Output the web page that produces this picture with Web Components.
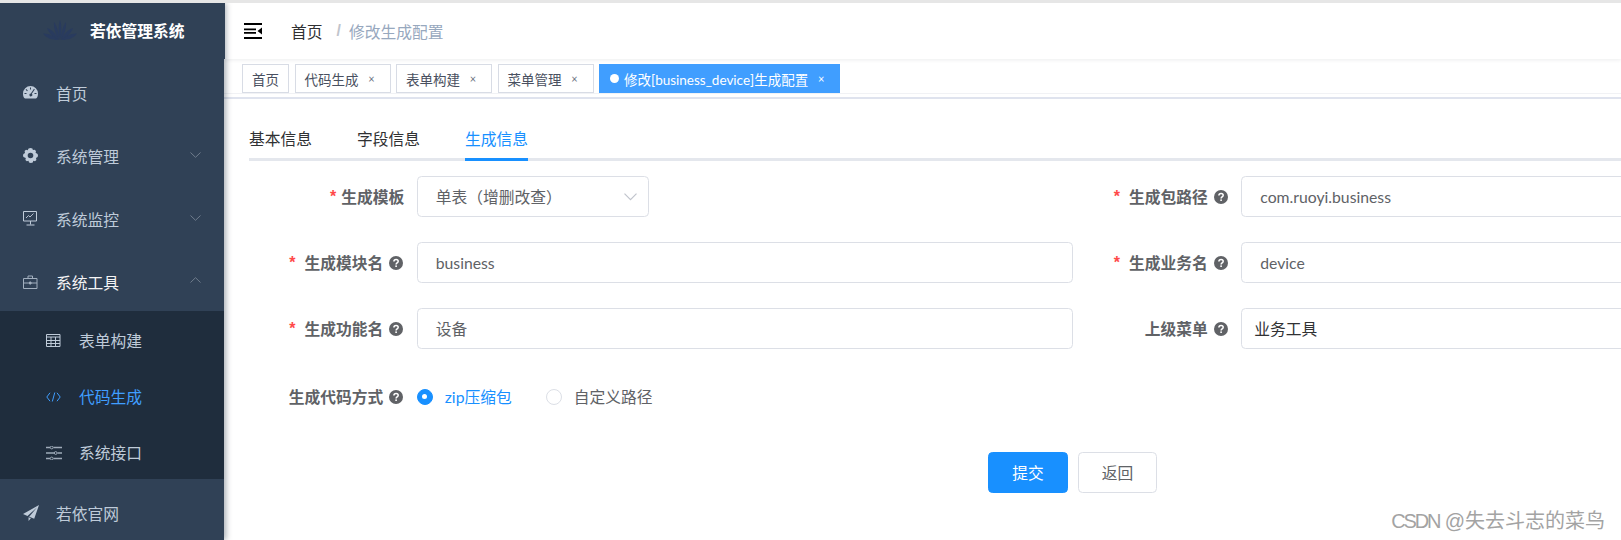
<!DOCTYPE html>
<html lang="zh">
<head>
<meta charset="utf-8">
<title>修改生成配置</title>
<style>
html, body { margin: 0; padding: 0; background: #fff; }
body { width: 1621px; height: 540px; overflow: hidden; font-family: Lato, "Noto Sans CJK SC", sans-serif; font-size: 15.75px; color: #606266; }
</style>
</head>
<body>
<app-shell>
  <side-bar slot="side">
    <menu-item icon="dashboard">首页</menu-item>
    <menu-item icon="gear" arrow="down">系统管理</menu-item>
    <menu-item icon="monitor" arrow="down">系统监控</menu-item>
    <menu-item icon="case" arrow="up" open>系统工具</menu-item>
    <sub-menu>
      <menu-item sub icon="table">表单构建</menu-item>
      <menu-item sub icon="code" active>代码生成</menu-item>
      <menu-item sub icon="sliders">系统接口</menu-item>
    </sub-menu>
    <menu-item icon="plane">若依官网</menu-item>
  </side-bar>
  <top-nav slot="main"></top-nav>
  <tag-bar slot="main">
    <tag-item>首页</tag-item>
    <tag-item closable>代码生成</tag-item>
    <tag-item closable>表单构建</tag-item>
    <tag-item closable>菜单管理</tag-item>
    <tag-item closable active>修改[business_device]生成配置</tag-item>
  </tag-bar>
  <gen-page slot="main">
    <gen-tabs></gen-tabs>
    <gen-form>
      <form-field required label="生成模板"><select-box style="width:232px">单表（增删改查）</select-box></form-field>
      <form-field required hint label="生成包路径"><text-box>com.ruoyi.business</text-box></form-field>
      <form-field required hint label="生成模块名"><text-box>business</text-box></form-field>
      <form-field required hint label="生成业务名"><text-box>device</text-box></form-field>
      <form-field required hint label="生成功能名"><text-box>设备</text-box></form-field>
      <form-field hint label="上级菜单"><text-box tree>业务工具</text-box></form-field>
      <form-field hint label="生成代码方式" style="padding-top:2px">
        <radio-opt checked>zip压缩包</radio-opt>
        <radio-opt>自定义路径</radio-opt>
      </form-field>
      <form-actions slot="actions">
        <app-button primary>提交</app-button>
        <app-button>返回</app-button>
      </form-actions>
    </gen-form>
  </gen-page>
  <water-mark slot="over"><span style="letter-spacing:-2.200px">CSDN</span> @失去斗志的菜鸟</water-mark>
</app-shell>

<script>
const ICONS = {
  dashboard: '<svg viewBox="0 0 15 13" width="15" height="13"><path fill="currentColor" fill-rule="evenodd" d="M7.5 0A7.5 7.5 0 0 0 0 7.5c0 1.9.5 3.6 1.3 4.6.2.3.5.4.8.4h10.8c.3 0 .6-.1.8-.4.8-1 1.3-2.7 1.3-4.6A7.5 7.5 0 0 0 7.5 0zM7 1.6h1v2H7zM3.300 3l1.500 1.500-.7.7-1.500-1.500zM1.500 7h2v1h-2zm10 0h2v1h-2zM11 2.800l.8.6-3 4.300a1.500 1.500 0 1 1-1-.3z"/></svg>',
  gear: '<svg viewBox="0 0 15 15" width="15" height="15"><path fill="currentColor" fill-rule="evenodd" d="M5.600.4 7.500 0l1.900.4.5 1.700 1.700-.4 1.400 1.300-.4 1.800L14.600 6l.4 1.500-.4 1.500-1.600 1.100.4 1.800-1.400 1.300-1.700-.4-.5 1.700-1.900.4-1.900-.4-.5-1.700-1.700.4-1.400-1.300.4-1.800L.4 9 0 7.500.4 6l1.600-1.100-.4-1.800L3 1.800l1.700.4zM7.500 4.700a2.800 2.800 0 1 0 0 5.600 2.800 2.800 0 0 0 0-5.600z"/></svg>',
  monitor: '<svg viewBox="0 0 15 15" width="15" height="15" fill="none" stroke="currentColor"><path d="M.5.5h13v9.500H.5zM7.500 10v3.500M3.500 14h8"/><path d="M3 7l2.500-2.500L7 6l3.500-3.500" stroke-width=".9"/></svg>',
  case: '<svg viewBox="0 0 15 14" width="15" height="14" fill="none" stroke="currentColor" opacity=".8"><path d="M.5 3.500h13.500v10H.5zM.5 8h13.500M5 3.500v-2.500h4.500v2.500"/><path fill="currentColor" d="M6.500 7h1.500v2H6.500z"/></svg>',
  table: '<svg viewBox="0 0 15 13" width="15" height="13" fill="none" stroke="currentColor"><path d="M.5.500h13.500v12H.5zM.5 3h13.500M.5 6.500h13.500M.5 9.500h13.500M5 3v9.500M9.500 3v9.500"/></svg>',
  code: '<svg viewBox="0 0 15 10" width="15" height="10" fill="none" stroke="currentColor"><path d="M4 .8.800 5 4 9.200M11 .8 14.200 5 11 9.200M8.800.5 6.300 9.500"/></svg>',
  sliders: '<svg viewBox="0 0 16 14" width="16" height="14" fill="none" stroke="currentColor" stroke-width="1.500" opacity=".8"><path d="M0 1.500h4M7.500 1.500H16M0 7h8M11.500 7H16M0 12.500h4M7.500 12.500H16"/><circle cx="5.700" cy="1.500" r="1.400" stroke-width="1"/><circle cx="9.700" cy="7" r="1.400" stroke-width="1"/><circle cx="5.700" cy="12.500" r="1.400" stroke-width="1"/></svg>',
  plane: '<svg viewBox="0 0 15 15" width="16" height="16"><path fill="currentColor" d="M15 0 0 8.500l4.200 1.700L13 2.400 5.800 10.900 10.500 13zM5.200 11.500V15l2.200-2.500z"/></svg>'
};
const HINT = '<svg viewBox="0 0 14 14" width="14" height="14"><circle cx="7" cy="7" r="7" fill="#606266"/><path d="M4.900 5.400c0-1.300 1-2 2.200-2s2.100.7 2.100 1.800c0 1.700-2.100 1.600-2.100 3.200" fill="none" stroke="#fff" stroke-width="1.500"/><rect x="6.300" y="9.400" width="1.600" height="1.600" fill="#fff"/></svg>';

// every element here is just css + markup in an open shadow root
class Base extends HTMLElement {
  constructor() {
    super();
    this.attachShadow({mode: 'open'});
  }
  connectedCallback() {
    this.shadowRoot.innerHTML = this.template();
  }
}

customElements.define('app-shell', class extends Base {
  template() { return `
<style>
:host { display: block; position: relative; width: 1621px; height: 540px; overflow: hidden; box-sizing: border-box; border-top: 3px solid #e6e6e6; }
.wrap { display: flex; height: 100%; }
.main { flex: 1; min-width: 0; display: flex; flex-direction: column; }
</style>
<div class="wrap">
  <slot name="side"></slot>
  <div class="main"><slot name="main"></slot></div>
</div>
<slot name="over"></slot>`; }
});

customElements.define('side-bar', class extends Base {
  template() { return `
<style>
:host { display: block; width: 224px; flex: none; height: 100%; background: #304156; position: relative; z-index: 3; box-shadow: 2px 0 6px rgba(0,21,41,.35); }
.logo { height: 56px; width: 225px; background: #304156; display: flex; align-items: center; box-sizing: border-box; padding: 0 0 2px 43px; }
svg { display: block; flex: none; }
.title { margin-left: 13px; color: #fff; font-weight: 700; font-size: 15.75px; white-space: nowrap; }
</style>
<div class="logo">
  <svg viewBox="0 0 34 20" width="34" height="20" fill="#293b5e">
    <path d="M17 0c1.500 3 2 12 0 20-2-8-1.500-17 0-20z"/>
    <path d="M11 2c2.500 3 5 11 5.500 18C12.500 15 10.500 8 11 2z"/>
    <path d="M23 2c-2.500 3-5 11-5.500 18C21.500 15 23.500 8 23 2z"/>
    <path d="M4 8c5 1.500 9.500 6.500 12 12C10.500 17.500 6 13.500 4 8z"/>
    <path d="M30 8c-5 1.500-9.500 6.500-12 12 5.500-2.500 10-6.500 12-12z"/>
    <path d="M0 13.500c5-.5 11 2.500 15.500 6.500C9 20 3 18 0 13.500z"/>
    <path d="M34 13.500c-5-.5-11 2.500-15.500 6.500C25 20 31 18 34 13.500z"/>
  </svg>
  <span class="title">若依管理系统</span>
</div>
<slot></slot>`; }
});

customElements.define('sub-menu', class extends Base {
  template() { return `
<style>:host { display: block; background: #1f2d3d; }</style>
<slot></slot>`; }
});

customElements.define('menu-item', class extends Base {
  template() {
    const sub = this.hasAttribute('sub');
    const active = this.hasAttribute('active');
    const color = active ? '#409eff' : this.hasAttribute('open') ? '#f4f4f5' : '#bfcbd9';
    const dir = this.getAttribute('arrow');
    const arrow = dir ? `<svg class="arrow" viewBox="0 0 11 6" width="11" height="6" fill="none" stroke="#6f7c8c"><path d="${dir === 'up' ? 'M.5 5.500 5.500.7l5 4.800' : 'M.5.500l5 4.800 5-4.800'}"/></svg>` : '';
    return `
<style>
:host { display: block; }
.row { display: flex; align-items: center; box-sizing: border-box; height: ${sub ? 56 : 63}px; padding: ${sub ? '3px 0 0 46px' : '5px 0 0 23px'}; position: relative; color: ${color}; white-space: nowrap; }
.ic { width: 33px; flex: none; display: flex; margin-top: ${sub ? 0 : -1}px; color: ${active ? '#409eff' : '#bfcbd9'}; }
svg { display: block; }
.arrow { position: absolute; left: 190px; top: ${dir === 'up' ? 29 : 30}px; }
</style>
<div class="row"><span class="ic">${ICONS[this.getAttribute('icon')] || ''}</span><slot></slot>${arrow}</div>`;
  }
});

customElements.define('top-nav', class extends Base {
  template() { return `
<style>
:host { display: flex; align-items: center; flex: none; height: 56px; box-sizing: border-box; padding-left: 20px; background: #fff; box-shadow: 0 1px 4px rgba(0,21,41,.08); position: relative; z-index: 1; }
svg { display: block; flex: none; }
.crumb { margin-left: 29px; color: #303133; display: flex; align-items: center; }
.sep { color: #c0c4cc; font-family: "Liberation Sans", sans-serif; font-weight: 700; margin: 0 8px 0 14px; }
.cur { color: #97a8be; }
</style>
<svg viewBox="0 0 18 16" width="18" height="16" fill="#000"><path d="M0 0h18v2H0zM0 14h18v2H0zM0 5.500h12v1.800H0zM0 9h12v1.800H0zM18 4.500v7L13.500 8z"/></svg>
<div class="crumb"><span>首页</span><span class="sep">/</span><span class="cur">修改生成配置</span></div>`; }
});

customElements.define('tag-bar', class extends Base {
  template() { return `
<style>
:host { display: flex; flex: none; height: 40px; box-sizing: border-box; padding: 5px 0 0 18px; gap: 5.500px; background: linear-gradient(transparent 34px, #f1f2f5 34px, #f1f2f5 35px, transparent 35px), #fff; border-bottom: 2px solid #dfe3ee; }
</style>
<slot></slot>`; }
});

customElements.define('tag-item', class extends Base {
  template() {
    const active = this.hasAttribute('active');
    return `
<style>
:host { display: block; flex: none; }
.tag { display: flex; align-items: center; height: 29px; box-sizing: border-box; padding: 0 12px 0 9px; font-size: 13.500px; white-space: nowrap; border: 1px solid ${active ? '#409eff' : '#d8dce5'}; background: ${active ? '#409eff' : '#fff'}; color: ${active ? '#fff' : '#495060'}; }
.dot { width: 9px; height: 9px; border-radius: 50%; background: #fff; margin: 0 5px 0 1px; }
.x { font-size: 11px; margin-left: 9px; margin-right: 2px; width: 8px; text-align: center; color: ${active ? '#fff' : '#6b7280'}; }
</style>
<div class="tag" style="${this.hasAttribute('closable') ? '' : 'padding-right:9px'}">${active ? '<span class="dot"></span>' : ''}<slot></slot>${this.hasAttribute('closable') ? '<span class="x">×</span>' : ''}</div>`;
  }
});

customElements.define('gen-page', class extends Base {
  template() { return `
<style>:host { display: block; flex: 1; min-height: 0; padding: 0 0 0 25px; box-sizing: border-box; }</style>
<slot></slot>`; }
});

customElements.define('gen-tabs', class extends Base {
  template() { return `
<style>
:host { display: flex; height: 62px; box-sizing: border-box; border-bottom: 3px solid #e4e7ed; gap: 45px; margin-bottom: 15px; }
span { display: flex; align-items: center; box-sizing: border-box; height: 62px; padding-top: 20px; color: #303133; white-space: nowrap; border-bottom: 3px solid transparent; }
.on { color: #1890ff; border-bottom-color: #1890ff; }
</style>
<span>基本信息</span><span>字段信息</span><span class="on">生成信息</span>`; }
});

customElements.define('gen-form', class extends Base {
  template() { return `
<style>
:host { display: grid; grid-template-columns: 824.5px 824.5px; width: 1649px; margin-left: -1px; row-gap: 25px; }
.act { grid-column: 1 / -1; display: flex; justify-content: center; padding-top: 10px; }
</style>
<slot></slot>
<div class="act"><slot name="actions"></slot></div>`; }
});

customElements.define('form-field', class extends Base {
  template() {
    const hasHint = this.hasAttribute('hint');
    const req = this.hasAttribute('required') ? `<i style="margin-right:${hasHint ? 9 : 5}px">*</i>` : '';
    const hint = hasHint ? `<span class="q">${HINT}</span>` : '';
    return `
<style>
:host { display: flex; align-items: center; height: 41px; min-width: 0; }
.lab { width: 168.750px; flex: none; box-sizing: border-box; padding-right: ${hasHint ? 13.5 : 12.5}px; display: flex; align-items: center; justify-content: flex-end; font-weight: 700; color: #606266; white-space: nowrap; }
i { font-style: normal; font-weight: 700; font-family: "Liberation Sans", sans-serif; font-size: 16px; color: #ff4949; }
.q { margin-left: 6px; display: flex; }
.val { flex: 1; min-width: 0; display: flex; align-items: center; gap: 34px; }
</style>
<div class="lab">${req}<span>${this.getAttribute('label')}</span>${hint}</div>
<div class="val"><slot></slot></div>`;
  }
});

customElements.define('text-box', class extends Base {
  template() {
    const tree = this.hasAttribute('tree');
    return `
<style>
:host { display: flex; align-items: center; flex: 1; height: 41px; box-sizing: border-box; border: 1px solid #dcdfe6; border-radius: 4.500px; padding-left: ${tree ? 12 : 18}px; color: ${tree ? '#303133' : '#606266'}; background: #fff; white-space: nowrap; }
</style>
<slot></slot>`;
  }
});

customElements.define('select-box', class extends Base {
  template() { return `
<style>
:host { display: flex; align-items: center; justify-content: space-between; flex: none; height: 41px; box-sizing: border-box; border: 1px solid #dcdfe6; border-radius: 4.500px; padding: 0 11px 0 18px; color: #606266; background: #fff; white-space: nowrap; }
svg { display: block; }
</style>
<span><slot></slot></span>
<svg viewBox="0 0 13 8" width="13" height="8" fill="none" stroke="#c0c4cc" stroke-width="1.200"><path d="M.5.700l6 6 6-6"/></svg>`; }
});

customElements.define('radio-opt', class extends Base {
  template() {
    const on = this.hasAttribute('checked');
    return `
<style>
:host { display: flex; align-items: center; flex: none; gap: 12px; color: ${on ? '#1890ff' : '#606266'}; white-space: nowrap; }
.c { width: 16px; height: 16px; box-sizing: border-box; border-radius: 50%; border: 1px solid ${on ? '#1890ff' : '#dcdfe6'}; background: ${on ? '#1890ff' : '#fff'}; display: flex; align-items: center; justify-content: center; }
.c b { width: 5px; height: 5px; border-radius: 50%; background: #fff; }
</style>
<span class="c">${on ? '<b></b>' : ''}</span><slot></slot>`;
  }
});

customElements.define('form-actions', class extends Base {
  template() { return `
<style>:host { display: flex; gap: 10px; }</style>
<slot></slot>`; }
});

customElements.define('app-button', class extends Base {
  template() {
    const p = this.hasAttribute('primary');
    return `
<style>
:host { display: flex; align-items: center; justify-content: center; width: ${p ? 80 : 79}px; height: 41px; box-sizing: border-box; border-radius: 4.500px; border: 1px solid ${p ? '#1890ff' : '#dcdfe6'}; background: ${p ? '#1890ff' : '#fff'}; color: ${p ? '#fff' : '#606266'}; }
</style>
<slot></slot>`;
  }
});

customElements.define('water-mark', class extends Base {
  template() { return `
<style>
:host { position: absolute; right: 16px; bottom: 6px; font-family: "Liberation Sans", "Noto Sans CJK SC", sans-serif; font-size: 20px; line-height: 26px; color: #a3a3a3; white-space: nowrap; z-index: 5; }
</style>
<slot></slot>`; }
});
</script>
</body>
</html>
